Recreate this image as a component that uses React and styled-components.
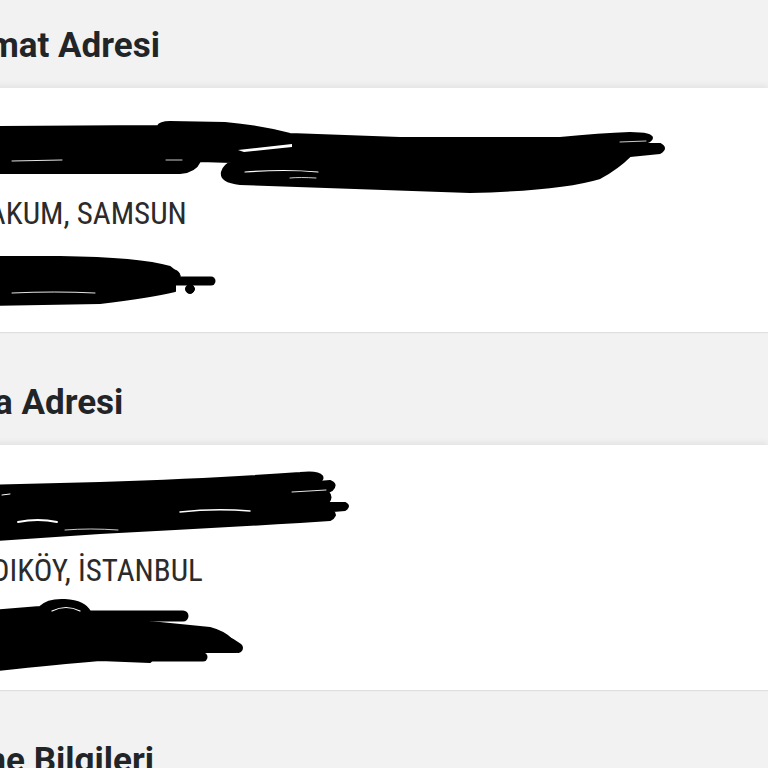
import React from "react";
import styled, { createGlobalStyle } from "styled-components";

const GlobalStyle = createGlobalStyle`
  html, body { margin: 0; padding: 0; background: #f2f2f2; overflow: hidden; }
  body { font-family: Roboto, "Noto Sans", sans-serif; }
`;

/* The screenshot is a view scrolled 25px down and 100px right. */
const Page = styled.main`
  margin: -25px 0 0 -100px;
  width: calc(100% + 100px);
  background: #f2f2f2;
  min-height: 900px;
`;

const SectionHeader = styled.h2`
  margin: 0;
  height: 113px;
  box-sizing: border-box;
  display: flex;
  align-items: flex-end;
  padding: 0 0 25px 13px;
  font-family: Roboto, sans-serif;
  font-weight: 700;
  font-size: 35px;
  line-height: 35px;
  color: #222528;
  white-space: nowrap;
`;

const Card = styled.section`
  background: #fff;
  height: ${(p) => p.$h}px;
  box-shadow: 0 -3px 6px rgba(0, 0, 0, 0.06), 0 1px 1px rgba(0, 0, 0, 0.07);
  display: flex;
  flex-direction: column;
  position: relative;
`;

const Redaction = styled.svg`
  display: block;
  width: 868px;
  height: ${(p) => p.$h}px;
  flex: none;
`;

const AddressLine = styled.p`
  margin: 0;
  padding-left: 57px;
  font-family: Roboto, sans-serif;
  font-stretch: 87.5%;
  font-weight: 400;
  font-size: 31px;
  line-height: 40px;
  color: #2b2b2b;
  white-space: nowrap;
`;

function Scribble({ top, h, children }) {
  return (
    <Redaction $h={h} viewBox={`-100 ${top} 868 ${h}`} aria-hidden="true">
      <g fill="#000" stroke="#000" strokeLinecap="round" strokeLinejoin="round">
        {children}
      </g>
    </Redaction>
  );
}

const W = ({ d, w = 1 }) => (
  <path d={d} fill="none" stroke="#fff" strokeWidth={w} strokeLinecap="round" />
);

export default function App() {
  return (
    <>
      <GlobalStyle />
      <Page>
        <SectionHeader>Teslimat Adresi</SectionHeader>
        <Card $h={244}>
          <Scribble top={88} h={106}>
            <path
              strokeWidth="2"
              d="M -20 127 L 158 126 Q 160 122 170 122 L 225 123 Q 260 126 290 134 L 400 138 L 560 138 Q 600 134 630 133 Q 652 133 652 138 Q 652 142 640 144 L 660 144 Q 668 148 660 153 L 630 156 Q 618 168 600 178 Q 560 190 470 192 L 240 184 Q 220 182 222 172 Q 224 165 232 162 L 200 161 Q 195 172 180 173 L -20 173 Z"
            />
            <W d="M 12 161 L 62 160" w={0.9} />
            <W d="M 166 160 L 182 160" w={0.8} />
            <W d="M 245 172 Q 285 169 318 172" w={1.2} />
            <W d="M 290 178 Q 300 177 316 178" w={0.8} />
            <W d="M 620 142 L 646 141" w={0.8} />
            <path fill="#fff" stroke="none" d="M 238 150 L 292 144 L 292 147 L 244 152 Z" />
          </Scribble>
          <AddressLine>ATAKUM, SAMSUN</AddressLine>
          <Scribble top={234} h={98}>
            <path
              strokeWidth="2"
              d="M -20 257 L 60 257 Q 140 258 170 267 L 175 271 L 175 291 Q 150 297 100 303 L -20 305 Z"
            />
            <path fill="none" strokeWidth="9" d="M 172 281 L 211 281" />
            <circle cx="190" cy="289" r="4.5" />
            <circle cx="174" cy="276" r="6" />
            <circle cx="113" cy="264" r="4" fill="none" strokeWidth="1.5" />
            <W d="M 12 293 Q 55 291 95 293" w={0.9} />
          </Scribble>
        </Card>

        <SectionHeader>Fatura Adresi</SectionHeader>
        <Card $h={245}>
          <Scribble top={445} h={106}>
            <path
              strokeWidth="2"
              d="M -20 486 L 100 483 Q 220 479 300 473 Q 318 471 322 476 Q 324 480 318 482 L 330 481 Q 338 484 332 490 L 328 492 Q 333 497 328 503 L 345 503 Q 351 506 345 510 L 333 511 Q 338 516 330 520 L 300 522 Q 200 528 100 533 L -20 541 Z"
            />
            <W d="M 292 492 L 326 490" w={0.9} />
            <W d="M 180 512 Q 215 508 250 511" w={1.5} />
            <W d="M 18 522 Q 38 518 57 522" w={1.8} />
            <W d="M 65 530 Q 90 528 118 530" w={0.8} />
            <W d="M 2 495 L 10 494" w={1} />
          </Scribble>
          <AddressLine>KADIKÖY, İSTANBUL</AddressLine>
          <Scribble top={591} h={99}>
            <path
              strokeWidth="2"
              d="M -20 612 L 40 607 Q 48 599 65 600 Q 85 601 90 612 L 150 622 L 210 628 Q 225 632 232 640 L 236 652 L 160 652 L 150 662 L 100 660 Q 50 664 -20 672 Z"
            />
            <path fill="none" strokeWidth="11" d="M 90 616 L 183 616" />
            <path fill="none" strokeWidth="10" d="M 200 633 Q 225 638 238 648" />
            <path fill="none" strokeWidth="9" d="M 150 657 L 203 657" />
            <W d="M 52 611 Q 66 604 80 611" w={1.2} />
          </Scribble>
        </Card>

        <SectionHeader>Ödeme Bilgileri</SectionHeader>
      </Page>
    </>
  );
}
